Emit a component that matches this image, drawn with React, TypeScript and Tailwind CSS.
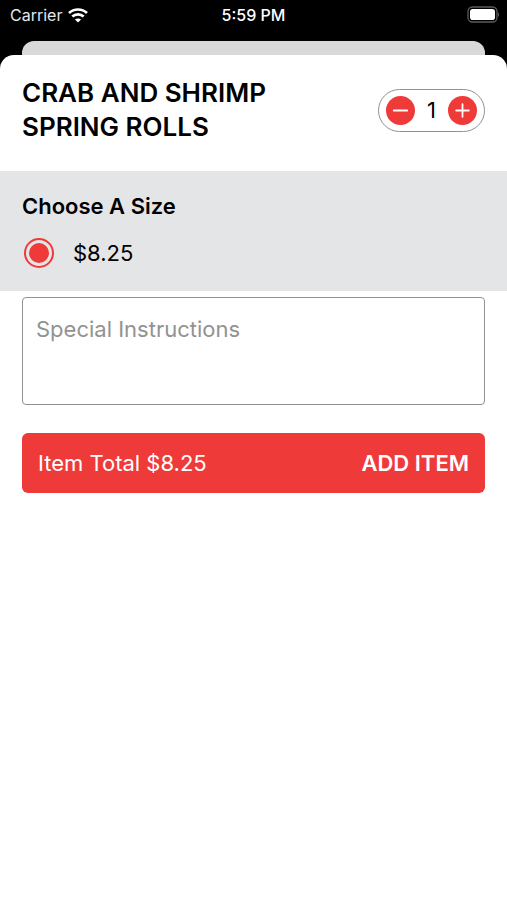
import { useState } from 'react'

interface IQuantityStepper {
  value: number
  onChange: (value: number) => void
}

const UNIT_PRICE = 8.25

function StatusBar() {
  return (
    <div className="grid h-[41px] grid-cols-3 items-start px-2 pt-1 text-white">
      <div className="flex h-[22px] items-center gap-1.5 pl-0.5">
        <span className="text-base text-gray-200">Carrier</span>
        <svg className="h-[15px] w-5" viewBox="0 0 20 15" fill="none" stroke="currentColor" strokeWidth="2.7" aria-hidden>
          <path d="M1 5C6 .3 14 .3 19 5" />
          <path d="M4.3 8.6c3.2-3 8.2-3 11.4 0" />
          <path d="M10 14.6 6.9 11.6c1.7-1.6 4.5-1.6 6.2 0z" fill="currentColor" stroke="none" />
        </svg>
      </div>
      <span className="text-center text-base leading-[22px] font-medium">5:59 PM</span>
      <div className="flex h-5 items-center justify-end">
        <svg className="h-[17px] w-[33px]" viewBox="0 0 33 17" aria-hidden>
          <rect x="2" y="1" width="29" height="15" rx="4.5" fill="none" stroke="#5c5c5c" strokeWidth="1.3" />
          <rect x="4" y="3" width="25" height="11" rx="2.8" fill="#fff" />
          <path d="M32 6.2c1.3.9 1.3 3.7 0 4.6z" fill="#5c5c5c" />
        </svg>
      </div>
    </div>
  )
}

function QuantityStepper({ value, onChange }: IQuantityStepper) {
  const buttonClass = 'flex size-[29px] items-center justify-center rounded-full bg-[#ee3a39] text-white'

  return (
    <div className="flex h-[43px] w-[107px] shrink-0 items-center justify-between rounded-full border border-[#929292] px-[7px]">
      <button type="button" aria-label="Decrease quantity" className={buttonClass} onClick={() => onChange(Math.max(1, value - 1))}>
        <svg className="size-[29px]" viewBox="0 0 29 29" stroke="currentColor" strokeWidth="1.8" strokeLinecap="round" aria-hidden>
          <path d="M7.8 14.5h13.4" />
        </svg>
      </button>
      <span className="text-[22px]">{value}</span>
      <button type="button" aria-label="Increase quantity" className={buttonClass} onClick={() => onChange(value + 1)}>
        <svg className="size-[29px]" viewBox="0 0 29 29" stroke="currentColor" strokeWidth="1.8" strokeLinecap="round" aria-hidden>
          <path d="M8.2 14.5h12.6M14.5 8.2v12.6" />
        </svg>
      </button>
    </div>
  )
}

export default function App() {
  const [quantity, setQuantity] = useState(1)

  return (
    <div className="flex min-h-screen flex-col bg-black font-['Inter',sans-serif] text-black">
      <StatusBar />
      {/* Edge of the screen stacked behind the sheet */}
      <div className="mx-[22px] h-3.5 rounded-t-xl bg-[#d9d9d9]" />
      <main className="flex-1 rounded-t-[14px] bg-white">
        <header className="flex items-center justify-between gap-4 px-[22px] pt-[21px] pb-[27px]">
          <h1 className="max-w-[280px] text-[26px] leading-[34px] font-semibold">CRAB AND SHRIMP SPRING ROLLS</h1>
          <QuantityStepper value={quantity} onChange={setQuantity} />
        </header>

        <fieldset className="bg-[#e4e5e7] px-[22px] pt-[18px] pb-[21px]">
          <legend className="float-left w-full text-[22px] leading-[34px] font-semibold">Choose A Size</legend>
          <label className="clear-both flex h-[47px] items-end gap-[19px]">
            <span className="flex h-[34px] items-center pl-0.5">
              <input
                type="radio"
                name="size"
                defaultChecked
                className="size-[30px] appearance-none rounded-full border-2 border-[#ee3a39] bg-[#ee3a39] bg-clip-content p-[3px]"
              />
            </span>
            <span className="text-[22px] leading-[34px]">$8.25</span>
          </label>
        </fieldset>

        <form className="px-[22px] pt-1.5" onSubmit={(e) => e.preventDefault()}>
          <textarea
            aria-label="Special Instructions"
            placeholder="Special Instructions"
            className="block h-[108px] w-full resize-none rounded border border-[#929292] px-[13px] py-3.5 text-[22px] leading-[34px] placeholder:text-[#929292]"
          />
          <button type="submit" className="mt-7 flex h-[60px] w-full items-center justify-between rounded-md bg-[#ee3a39] px-4 text-[22px] text-white">
            <span>Item Total ${(UNIT_PRICE * quantity).toFixed(2)}</span>
            <span className="font-semibold">ADD ITEM</span>
          </button>
        </form>
      </main>
    </div>
  )
}
